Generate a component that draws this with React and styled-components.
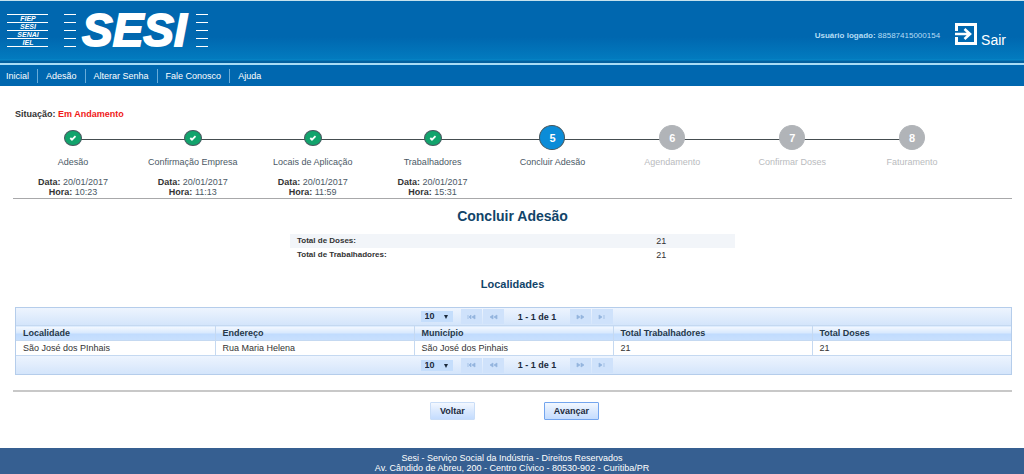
import React from "react";
import styled, { createGlobalStyle } from "styled-components";

const GlobalStyle = createGlobalStyle`
  * {
    box-sizing: border-box;
  }
  body {
    margin: 0;
    background-color: #ffffff;
    color: #333333;
    font-family: "Liberation Sans", Arial, sans-serif;
    font-size: 9px;
    line-height: 10px;
  }
  button,
  select {
    font-family: inherit;
  }
`;

const Page = styled.div`
  min-height: 100vh;
  display: flex;
  flex-direction: column;
`;

const Header = styled.header`
  height: 65px;
  padding: 0 18px 0 7px;
  display: flex;
  align-items: center;
  justify-content: space-between;
  border-top: 1px solid #c5e2ee;
  border-bottom: 2px solid #a9dcf5;
  background: linear-gradient(
    #0067af 0,
    #0067af 36px,
    #027bbf 58px,
    #0888c8 59px,
    #04609f 60px,
    #04609f 62px
  );
`;

const Logo = styled.svg`
  display: block;
  fill: #ffffff;
  stroke: #ffffff;
  font-family: "Liberation Sans", Arial, sans-serif;
  font-weight: bold;
  font-style: italic;
`;

const User = styled.div`
  display: flex;
  align-items: center;
  gap: 15px;
  padding-top: 8px;
  font-size: 8px;
  color: #b5ddf5;
`;

const Exit = styled.a`
  display: flex;
  align-items: flex-end;
  gap: 4px;
  padding-bottom: 4px;
  color: #ffffff;
  font-size: 14px;
  line-height: 9px;
  text-decoration: none;
`;

const Menu = styled.nav`
  height: 21px;
  display: flex;
  align-items: center;
  background-color: #0067af;
`;

const MenuLink = styled.a`
  height: 14px;
  padding: 0 8px;
  line-height: 14px;
  color: #ffffff;
  text-decoration: none;
  &:first-child {
    padding-left: 6px;
  }
  &:not(:last-child) {
    border-right: 1px solid #68acd9;
  }
`;

const Main = styled.main`
  flex: 1;
  padding: 23px 12px 28px 13px;
`;

const Status = styled.p`
  margin: 0 0 6px 2px;
  font-weight: bold;
  span {
    color: #f01818;
  }
`;

const Steps = styled.ol`
  margin: 0;
  padding: 0 40px 0 0;
  height: 73px;
  display: flex;
  list-style: none;
`;

const Step = styled.li`
  flex: 1;
  position: relative;
  display: flex;
  flex-direction: column;
  align-items: center;
  white-space: nowrap;
  color: ${(props) => (props.$pending ? "#b9bbbe" : "#4b5966")};
  /* line that joins a step to the next one */
  &:not(:last-child)::after {
    content: "";
    position: absolute;
    top: 14px;
    left: 50%;
    width: 100%;
    height: 1px;
    background-color: #454d50;
  }
`;

const markColors = {
  done: "#12a36c",
  current: "#0b8cd8",
  pending: "#b1b4b8",
};

const Mark = styled.div`
  z-index: 1;
  width: ${(props) => (props.$state === "done" ? 18 : 26)}px;
  height: ${(props) => (props.$state === "done" ? 16 : 25)}px;
  margin: ${(props) => (props.$state === "done" ? "5px 0 4px" : "0")};
  display: flex;
  align-items: center;
  justify-content: center;
  border: 1px solid
    ${(props) => (props.$state === "pending" ? "#b1b4b8" : "#47575e")};
  border-radius: 50%;
  background-color: ${(props) => markColors[props.$state]};
  color: #ffffff;
  font-size: 11px;
  font-weight: bold;
`;

const StepName = styled.span`
  margin-top: 7px;
`;

const StepDate = styled.div`
  margin-top: 10px;
  text-align: center;
  b {
    color: #333333;
  }
`;

const Rule = styled.hr`
  margin: 0;
  border: 0;
  height: ${(props) => props.$size}px;
  background-color: ${(props) => (props.$size > 1 ? "#c8c8c8" : "#a8a8aa")};
`;

const Title = styled.h1`
  margin: 9px 0 10px;
  font-size: 14px;
  line-height: 16px;
  text-align: center;
  color: #114469;
`;

const SubTitle = styled.h2`
  margin: 16px 0 17px;
  font-size: 11px;
  line-height: 12px;
  text-align: center;
  color: #114469;
`;

const Totals = styled.dl`
  max-width: 445px;
  margin: 0 auto;
`;

const Total = styled.div`
  height: 14px;
  padding: 0 7px;
  display: grid;
  grid-template-columns: 5fr 1fr;
  align-items: center;
  background-color: ${(props) => (props.$shaded ? "#f2f5f9" : "#ffffff")};
  dt {
    font-size: 8px;
    font-weight: bold;
  }
  dd {
    margin: 0;
  }
`;

const Grid = styled.section`
  margin: 0 0 15px 2px;
  border: 1px solid #b5cdeb;
`;

const PagerBar = styled.div`
  height: ${(props) => props.$height}px;
  padding-left: 7px;
  display: flex;
  align-items: center;
  justify-content: center;
  background: linear-gradient(#edf4fe, #d4e5fb);
  color: #1b2a3c;
  font-weight: bold;
`;

const SelectBox = styled.label`
  position: relative;
  margin-right: 8px;
  &::after {
    content: "";
    position: absolute;
    right: 5px;
    top: 4px;
    border: 2px solid transparent;
    border-top: 4px solid #1b2a3c;
    border-bottom: 0;
    pointer-events: none;
  }
`;

const PageSize = styled.select`
  appearance: none;
  display: block;
  width: 32px;
  height: 11px;
  padding: 0 0 0 4px;
  border: 0;
  border-radius: 0;
  background-color: #c5defc;
  color: inherit;
  font-size: 9px;
  font-weight: bold;
  line-height: 11px;
`;

const PageButton = styled.button`
  width: 21px;
  height: 15px;
  margin-right: 1px;
  padding: 0;
  display: flex;
  align-items: center;
  justify-content: center;
  border: 0;
  background-color: #cfe2fb;
  color: #94b4de;
`;

const Range = styled.span`
  width: 65px;
  text-align: center;
`;

const Table = styled.table`
  width: 100%;
  table-layout: fixed;
  border-collapse: collapse;
  th,
  td {
    height: 15px;
    padding: 0 7px;
    text-align: left;
    border-top: 1px solid #c5d9f1;
    border-bottom: 1px solid #c5d9f1;
  }
  th {
    color: #26384a;
    background: linear-gradient(#f5f9ff 0, #d5e7fe 50%, #c0dbfe 51%, #c8e0fe);
  }
  th:not(:last-child),
  td:not(:last-child) {
    border-right: 1px solid #c5d9f1;
  }
`;

const Actions = styled.div`
  margin-top: 10px;
  padding-left: 4px;
  display: flex;
  justify-content: center;
  gap: 69px;
`;

const Button = styled.button`
  height: 18px;
  padding: 0 9px;
  border: 1px solid ${(props) => (props.$focused ? "#73a5ee" : "#c9ddf7")};
  border-radius: 1px;
  background: linear-gradient(#f3f8ff, #dceafe 45%, #c4dcfe);
  color: #1b2a3c;
  font-size: 9px;
  font-weight: bold;
`;

const Footer = styled.footer`
  padding: 5px 0 1px;
  background-color: #365f91;
  color: #ffffff;
  text-align: center;
`;

const menu = ["Inicial", "Adesão", "Alterar Senha", "Fale Conosco", "Ajuda"];

const steps = [
  { name: "Adesão", state: "done", date: "20/01/2017", time: "10:23" },
  {
    name: "Confirmação Empresa",
    state: "done",
    date: "20/01/2017",
    time: "11:13",
  },
  {
    name: "Locais de Aplicação",
    state: "done",
    date: "20/01/2017",
    time: "11:59",
  },
  { name: "Trabalhadores", state: "done", date: "20/01/2017", time: "15:31" },
  { name: "Concluir Adesão", state: "current" },
  { name: "Agendamento", state: "pending" },
  { name: "Confirmar Doses", state: "pending" },
  { name: "Faturamento", state: "pending" },
];

const columns = [
  "Localidade",
  "Endereço",
  "Município",
  "Total Trabalhadores",
  "Total Doses",
];

const rows = [
  ["São José dos PInhais", "Rua Maria Helena", "São José dos Pinhais", 21, 21],
];

const SesiLogo = () => (
  <Logo width="202" height="60" viewBox="0 -10 202 60" role="img">
    <path
      d="M0 2.5h41M0 10.5h41M0 18.5h41M0 26.5h41M0 34.5h41M57 2.5h12M57 10.5h12M57 18.5h12M57 26.5h12M57 34.5h12M189 2.5h12M189 10.5h12M189 18.5h12M189 26.5h12M189 34.5h12"
      strokeWidth="1.2"
    />
    <g fontSize="7" textAnchor="middle" stroke="none">
      <text x="21" y="9">FIEP</text>
      <text x="21" y="17">SESI</text>
      <text x="21" y="25">SENAI</text>
      <text x="21" y="33">IEL</text>
    </g>
    <text x="75" y="34" fontSize="46" strokeWidth="1.8">
      SESI
    </text>
  </Logo>
);

const ExitIcon = () => (
  <svg width="22" height="22" viewBox="0 0 22 22" fill="none" stroke="#ffffff">
    <path d="M1.500 8V1.500h19v19h-19V14" strokeWidth="3" />
    <path d="M0 11h14M9.500 6l5.500 5-5.500 5" strokeWidth="2.6" />
  </svg>
);

const Check = () => (
  <svg width="8" height="8" viewBox="0 0 8 8" fill="none" stroke="#ffffff">
    <path d="M1.300 4l1.700 1.700L6.500 2.200" strokeWidth="1.8" />
  </svg>
);

const pageIcons = {
  first: "M1 1v4M4 1v4L2 3zM8 1v4L5 3z",
  prev: "M4 1v4L1 3zM8 1v4L5 3z",
  next: "M1 1v4l3-2zM5 1v4l3-2z",
  last: "M1 1v4l3-2zM6 1v4",
};

const PageIcon = ({ kind }) => (
  <svg width="9" height="6" viewBox="0 0 9 6" fill="currentColor">
    <path d={pageIcons[kind]} stroke="currentColor" strokeWidth="0.7" />
  </svg>
);

const Pager = ({ height }) => (
  <PagerBar $height={height}>
    <SelectBox>
      <PageSize aria-label="Linhas por página" defaultValue="10">
        <option>10</option>
      </PageSize>
    </SelectBox>
    <PageButton aria-label="Primeira">
      <PageIcon kind="first" />
    </PageButton>
    <PageButton aria-label="Anterior">
      <PageIcon kind="prev" />
    </PageButton>
    <Range>1 - 1 de 1</Range>
    <PageButton aria-label="Próxima">
      <PageIcon kind="next" />
    </PageButton>
    <PageButton aria-label="Última">
      <PageIcon kind="last" />
    </PageButton>
  </PagerBar>
);

const App = () => (
  <>
    <GlobalStyle />
    <Page>
      <Header>
        <SesiLogo />
        <User>
          <span>
            <b>Usuário logado:</b> 88587415000154
          </span>
          <Exit href="#sair">
            <ExitIcon />
            Sair
          </Exit>
        </User>
      </Header>
      <Menu>
        {menu.map((item) => (
          <MenuLink href="#" key={item}>
            {item}
          </MenuLink>
        ))}
      </Menu>
      <Main>
        <Status>
          Situação: <span>Em Andamento</span>
        </Status>
        <Steps>
          {steps.map((step, index) => (
            <Step key={step.name} $pending={step.state === "pending"}>
              <Mark $state={step.state}>
                {step.state === "done" ? <Check /> : index + 1}
              </Mark>
              <StepName>{step.name}</StepName>
              {step.date && (
                <StepDate>
                  <b>Data:</b> {step.date}
                  <br />
                  <b>Hora:</b> {step.time}
                </StepDate>
              )}
            </Step>
          ))}
        </Steps>
        <Rule $size={1} />
        <Title>Concluir Adesão</Title>
        <Totals>
          <Total $shaded>
            <dt>Total de Doses:</dt>
            <dd>21</dd>
          </Total>
          <Total>
            <dt>Total de Trabalhadores:</dt>
            <dd>21</dd>
          </Total>
        </Totals>
        <SubTitle>Localidades</SubTitle>
        <Grid>
          <Pager height={17} />
          <Table>
            <thead>
              <tr>
                {columns.map((column) => (
                  <th key={column}>{column}</th>
                ))}
              </tr>
            </thead>
            <tbody>
              {rows.map((row) => (
                <tr key={row[0]}>
                  {row.map((cell, index) => (
                    <td key={columns[index]}>{cell}</td>
                  ))}
                </tr>
              ))}
            </tbody>
          </Table>
          <Pager height={18} />
        </Grid>
        <Rule $size={2} />
        <Actions>
          <Button>Voltar</Button>
          <Button $focused>Avançar</Button>
        </Actions>
      </Main>
      <Footer>
        Sesi - Serviço Social da Indústria - Direitos Reservados
        <br />
        Av. Cândido de Abreu, 200 - Centro Cívico - 80530-902 - Curitiba/PR
      </Footer>
    </Page>
  </>
);

export default App;
